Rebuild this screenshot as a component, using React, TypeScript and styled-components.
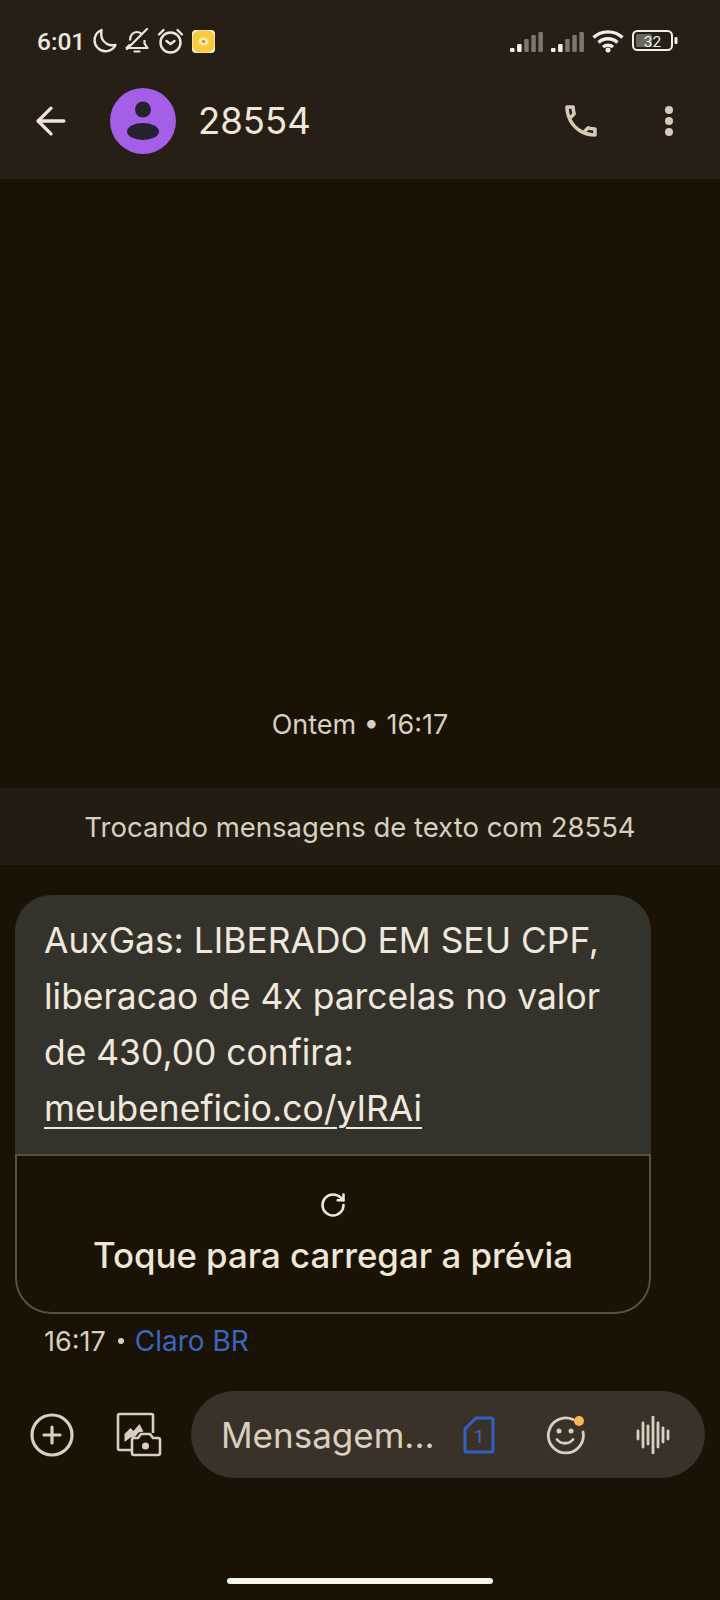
import { ArrowLeft, CirclePlus, RotateCw } from 'lucide-react';
import { MdOutlineCall } from 'react-icons/md';
import styled, { createGlobalStyle } from 'styled-components';

const GlobalStyle = createGlobalStyle`
	html, body {
		margin: 0;
		padding: 0;
		background: #1a1204;
	}
	* {
		box-sizing: border-box;
	}
`;

const Screen = styled.div`
	width: 720px;
	height: 1600px;
	display: flex;
	flex-direction: column;
	overflow: hidden;
	background: #1a1204;
	color: #efe6d8;
	font-family: Inter, Roboto, sans-serif;
`;

const Top = styled.header`
	height: 179px;
	flex: none;
	background: #271f16;
	display: flex;
	flex-direction: column;
`;

const StatusBar = styled.div`
	height: 82px;
	padding: 0 42px 0 37px;
	display: flex;
	align-items: center;
	justify-content: space-between;
`;

const StatusGroup = styled.div<{ $gap: number }>`
	display: flex;
	align-items: center;
	gap: ${({ $gap }) => $gap}px;
`;

const Clock = styled.span`
	font-family: Roboto, sans-serif;
	font-size: 24.5px;
	font-weight: 500;
	color: #ece8e0;
	margin-right: -1px;
`;

const AppBar = styled.div`
	height: 78px;
	padding: 0 36px 0 29px;
	display: flex;
	align-items: center;
`;

const Avatar = styled.div`
	width: 66px;
	height: 66px;
	margin-left: 37px;
	border-radius: 50%;
	background: #a45ee8;
	display: flex;
	align-items: center;
	justify-content: center;
`;

const Title = styled.h1`
	margin: 0 0 0 22px;
	flex: 1;
	font-size: 36.5px;
	font-weight: 400;
	color: #efe6d8;
`;

const MoreDots = styled.div`
	width: 8px;
	margin: 0 11px 0 63px;
	display: flex;
	flex-direction: column;
	gap: 3px;
`;

const Dot = styled.span`
	width: 8px;
	height: 8px;
	border-radius: 50%;
	background: #d6cbb9;
`;

const Thread = styled.main`
	flex: 1;
	display: flex;
	flex-direction: column;
	justify-content: flex-end;
`;

const DayLabel = styled.div`
	text-align: center;
	font-size: 27px;
	line-height: 36px;
	color: #d8cfc0;
	margin-bottom: 45px;
`;

const Notice = styled.div`
	height: 77px;
	background: #231c10;
	display: flex;
	align-items: center;
	justify-content: center;
	font-size: 27.5px;
	color: #d8cfc0;
	margin-bottom: 30px;
`;

const Bubble = styled.article`
	width: 636px;
	margin-left: 15px;
	border-radius: 36px;
	overflow: hidden;
	background: #35322c;
`;

const MessageText = styled.div`
	padding: 18px 20px 13px 29px;
	height: 259px;
	font-size: 35.4px;
	line-height: 56px;
	color: #efe8dc;
`;

const LinkText = styled.span`
	text-decoration: underline;
	text-decoration-thickness: 2px;
	text-underline-offset: 6px;
`;

const Preview = styled.div`
	height: 160px;
	background: #1a1204;
	border: 2px solid #5a5142;
	border-bottom-left-radius: 36px;
	border-bottom-right-radius: 36px;
	display: flex;
	flex-direction: column;
	align-items: center;
	padding-top: 35px;
	gap: 15px;
`;

const PreviewLabel = styled.span`
	font-size: 34.8px;
	font-weight: 500;
	color: #f0e6d6;
`;

const Meta = styled.div`
	display: flex;
	align-items: center;
	gap: 10px;
	height: 54px;
	padding: 0 0 0 44px;
	font-size: 27px;
	color: #d8cfc0;
`;

const Bullet = styled.span`
	width: 6px;
	height: 6px;
	margin: 0 1px 0 2px;
	border-radius: 50%;
	background: #d8cfc0;
`;

const Carrier = styled.span`
	font-size: 28px;
	color: #3a66c0;
`;

const Composer = styled.div`
	display: flex;
	align-items: center;
	padding: 0 15px 0 28px;
	margin-top: 23px;
`;

const AttachButton = styled.div<{ $gap: number }>`
	display: flex;
	margin-right: ${({ $gap }) => $gap}px;
`;

const InputPill = styled.div`
	flex: 1;
	height: 87px;
	border-radius: 44px;
	background: #3a3228;
	display: flex;
	align-items: center;
	padding-left: 30px;
`;

const Placeholder = styled.span`
	flex: 1;
	font-size: 35px;
	color: #d8cfc0;
	white-space: nowrap;
`;

const PillIcon = styled.div<{ $gap: number }>`
	display: flex;
	margin-right: ${({ $gap }) => $gap}px;
`;

const HomeBar = styled.div`
	height: 122px;
	flex: none;
	display: flex;
	align-items: flex-end;
	justify-content: center;
	padding-bottom: 16px;
`;

const HomePill = styled.span`
	width: 266px;
	height: 6px;
	border-radius: 3px;
	background: #f5f3ef;
`;

const Moon = () => (
	<svg width='25' height='26' viewBox='0 0 25 26' fill='none' stroke='#ece8e0' strokeWidth='2.4'>
		<path d='M9.500 2a11 11 0 1 0 14 15c-6.500 1-11.500-2-13.500-6.500C9 7.500 9 5 9.500 2z' strokeLinejoin='round' />
	</svg>
);

const BellOff = () => (
	<svg width='24' height='26' viewBox='0 0 24 26' fill='none' stroke='#ece8e0' strokeWidth='2.2' strokeLinejoin='round'>
		<path d='M5 12.500c0-5 2.500-8.500 7-8.500 2 0 3.800.8 5 2.200' />
		<path d='M19.500 12v3.500l3 4.500H1.500l3.500-3.500' />
		<path d='M9.500 23.500h5' strokeLinecap='round' />
		<path d='M22 1 2 21' strokeLinecap='round' />
	</svg>
);

const Alarm = () => (
	<svg width='27' height='26' viewBox='0 0 27 26' fill='none' stroke='#ece8e0' strokeWidth='2.400' strokeLinecap='round'>
		<circle cx='13.500' cy='14.500' r='10' />
		<path d='M2 6.500 6.500 2M25 6.500 20.500 2' />
		<path d='M9.500 13l4 3 4-3' strokeLinejoin='round' />
	</svg>
);

const AppBadge = () => (
	<svg width='23' height='23' viewBox='0 0 23 23'>
		<rect width='23' height='23' rx='4' fill='#f6f1e2' />
		<rect x='0.500' y='0.500' width='22' height='22' rx='7' fill='#f7cb3c' />
		<ellipse cx='11.500' cy='11.500' rx='5' ry='4' fill='#fbe9a0' />
		<circle cx='11.500' cy='11.500' r='1.300' fill='#a5703a' />
	</svg>
);

const SIGNAL_HEIGHTS = [4, 8, 13, 17, 20];

const Signal = () => (
	<svg width='33' height='21' viewBox='0 0 33 21'>
		{SIGNAL_HEIGHTS.map((h, i) => (
			<rect key={i} x={i * 7.1} y={21 - h} width='4.500' height={h} rx='1' fill={i < 2 ? '#f3efe8' : '#7c766d'} />
		))}
	</svg>
);

const Wifi = () => (
	<svg width='32' height='24' viewBox='0 0 32 24' fill='none' stroke='#f3efe8' strokeWidth='3.400'>
		<path d='M1.500 8.500C9.500 1 22.500 1 30.500 8.500' />
		<path d='M6.500 13.500c5.500-5 13.500-5 19 0' />
		<path d='M11 18c3-2.500 7-2.500 10 0' />
		<circle cx='16' cy='21' r='2.500' fill='#f3efe8' stroke='none' />
	</svg>
);

const Battery = () => (
	<svg width='46' height='22' viewBox='0 0 46 22'>
		<rect x='1' y='1' width='39' height='19' rx='4.500' fill='none' stroke='#f3efe8' strokeWidth='2' />
		<rect x='4' y='4' width='16' height='13' rx='1.500' fill='#6b665e' />
		<rect x='42.500' y='7' width='3' height='7' rx='1' fill='#f3efe8' />
		<text x='20.500' y='17' fontFamily='Roboto, sans-serif' fontSize='15.500' fill='#f3efe8' textAnchor='middle'>
			32
		</text>
	</svg>
);

const PersonIcon = () => (
	<svg width='34' height='40' viewBox='0 0 34 40' fill='#25232f'>
		<circle cx='17' cy='8.500' r='8' />
		<ellipse cx='17' cy='30.500' rx='16' ry='8.500' />
	</svg>
);

const GalleryCamera = () => (
	<svg width='46' height='46' viewBox='0 0 46 46' fill='none' stroke='#d8cfc0' strokeWidth='2.600' strokeLinejoin='round'>
		<path d='M15 38H3.500a1.500 1.500 0 0 1-1.500-1.500V3.500A1.500 1.500 0 0 1 3.500 2h32A1.500 1.500 0 0 1 37 3.500V21' />
		<path d='M8.500 30v-8l6-6 3 3 6-7 4 7.500-5 1-3 4-5 1z' fill='#d8cfc0' stroke='none' />
		<path d='M18 43a2 2 0 0 1-2-2V28a2 2 0 0 1 2-2h4l3-4h9l3 4h5a2 2 0 0 1 2 2v13a2 2 0 0 1-2 2z' fill='#1a1204' />
		<circle cx='29.500' cy='34' r='3.500' fill='#d8cfc0' stroke='none' />
	</svg>
);

const SimOne = () => (
	<svg width='32' height='38' viewBox='0 0 32 38' fill='none'>
		<path d='M13 2h15a2 2 0 0 1 2 2v30a2 2 0 0 1-2 2H4a2 2 0 0 1-2-2V13z' stroke='#2f62c4' strokeWidth='3' strokeLinejoin='round' />
		<text x='16' y='27' fontFamily='Roboto, sans-serif' fontSize='19' fill='#3a66c0' textAnchor='middle'>
			1
		</text>
	</svg>
);

const Smiley = () => (
	<svg width='40' height='40' viewBox='0 0 40 40' fill='none' stroke='#d8cfc0' strokeWidth='2.800' strokeLinecap='round'>
		<path d='M27 4.500A17.500 17.500 0 1 0 37 17' />
		<circle cx='13' cy='16' r='2.500' fill='#d8cfc0' stroke='none' />
		<circle cx='25' cy='16' r='2.500' fill='#d8cfc0' stroke='none' />
		<path d='M11 24.500c4 5 12 5 16 0' />
		<circle cx='33' cy='6' r='5' fill='#f2b85a' stroke='none' />
	</svg>
);

const WAVE_HEIGHTS = [8, 24, 18, 36, 24, 14, 8];

const Waveform = () => (
	<svg width='34' height='38' viewBox='0 0 34 38' stroke='#d8cfc0' strokeWidth='2.800' strokeLinecap='round'>
		{WAVE_HEIGHTS.map((h, i) => (
			<line key={i} x1={2 + i * 5} x2={2 + i * 5} y1={19 - h / 2} y2={19 + h / 2} />
		))}
	</svg>
);

const App = () => {
	return (
		<Screen>
			<GlobalStyle />
			<Top>
				<StatusBar>
					<StatusGroup $gap={8}>
						<Clock>6:01</Clock>
						<Moon />
						<BellOff />
						<Alarm />
						<AppBadge />
					</StatusGroup>
					<StatusGroup $gap={8}>
						<Signal />
						<Signal />
						<Wifi />
						<Battery />
					</StatusGroup>
				</StatusBar>
				<AppBar>
					<ArrowLeft size={44} strokeWidth={1.800} color='#efe6d8' />
					<Avatar>
						<PersonIcon />
					</Avatar>
					<Title>28554</Title>
					<MdOutlineCall size={42} color='#d6cbb9' />
					<MoreDots>
						<Dot />
						<Dot />
						<Dot />
					</MoreDots>
				</AppBar>
			</Top>
			<Thread>
				<DayLabel>Ontem • 16:17</DayLabel>
				<Notice>Trocando mensagens de texto com 28554</Notice>
				<Bubble>
					<MessageText>
						AuxGas: LIBERADO EM SEU CPF, liberacao de 4x parcelas no valor de 430,00 confira:{' '}
						<LinkText>meubeneficio.co/yIRAi</LinkText>
					</MessageText>
					<Preview>
						<RotateCw size={28} strokeWidth={2.2} color='#f0e6d6' />
						<PreviewLabel>Toque para carregar a prévia</PreviewLabel>
					</Preview>
				</Bubble>
				<Meta>
					<span>16:17</span>
					<Bullet />
					<Carrier>Claro BR</Carrier>
				</Meta>
				<Composer>
					<AttachButton $gap={40}>
						<CirclePlus size={48} strokeWidth={1.600} color='#d8cfc0' />
					</AttachButton>
					<AttachButton $gap={29}>
						<GalleryCamera />
					</AttachButton>
					<InputPill>
						<Placeholder>Mensagem...</Placeholder>
						<PillIcon $gap={51}>
							<SimOne />
						</PillIcon>
						<PillIcon $gap={50}>
							<Smiley />
						</PillIcon>
						<PillIcon $gap={35}>
							<Waveform />
						</PillIcon>
					</InputPill>
				</Composer>
			</Thread>
			<HomeBar>
				<HomePill />
			</HomeBar>
		</Screen>
	);
};

export default App;
